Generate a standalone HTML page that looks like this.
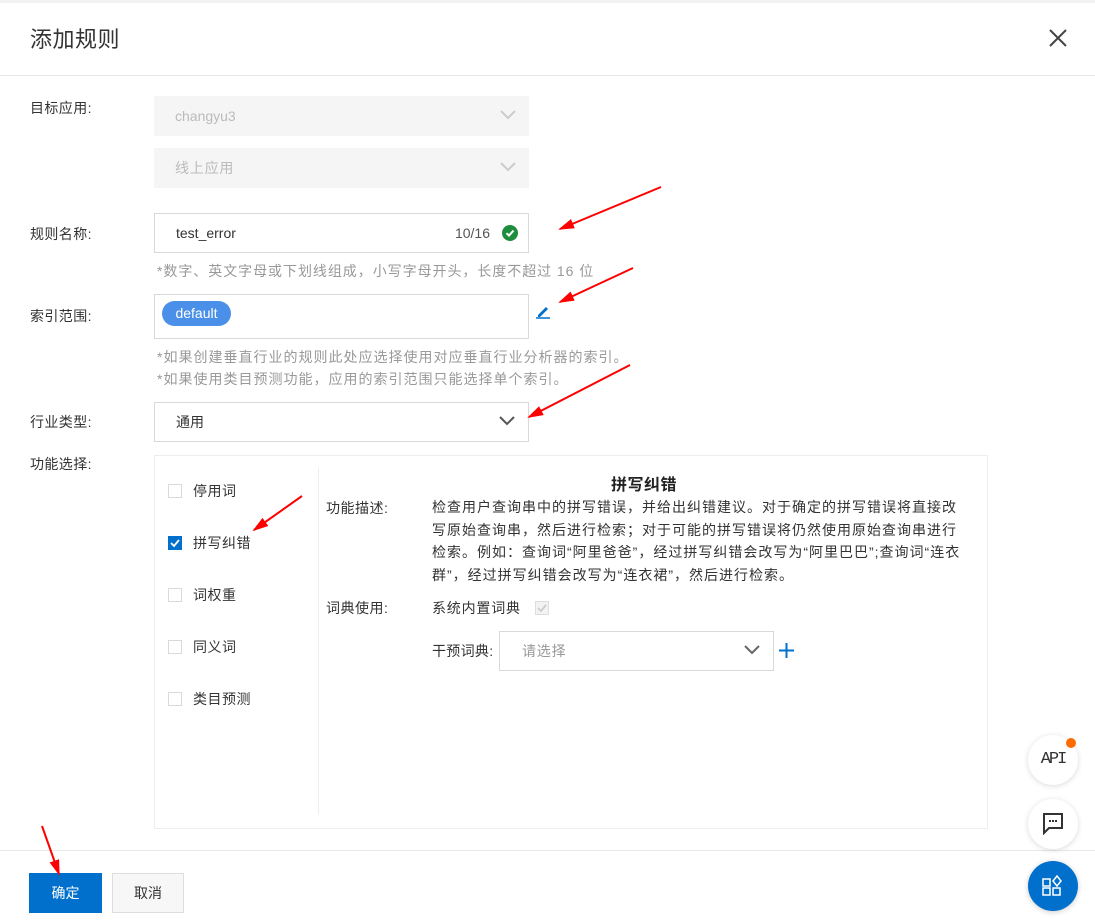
<!DOCTYPE html>
<html><head><meta charset="utf-8"><style>
*{box-sizing:border-box;margin:0;padding:0}
body{width:1095px;height:922px;background:#fff;font-family:"Liberation Sans","Noto Sans CJK SC",sans-serif;color:#333;font-size:14px;position:relative;overflow:hidden}
.a{position:absolute}
.lbl{position:absolute;left:30px;font-size:14px;color:#333;line-height:20px;letter-spacing:0.4px}
.sel{position:absolute;left:154px;width:375px;height:40px;line-height:40px;padding-left:21px;font-size:14px}
.chev{position:absolute;right:12px;top:12px}
.cb{position:absolute;left:168px;width:14px;height:14px;border:1px solid #d9d9d9;background:#fff}
.cl{position:absolute;left:193px;line-height:20px;letter-spacing:0.5px}
.d{position:absolute;left:432px;white-space:nowrap;line-height:22.5px;letter-spacing:1px}
</style></head><body>
<div class="a" style="left:0;top:0;width:1095px;height:3px;background:#f2f2f2"></div>
<div class="a" style="left:30px;top:24px;font-size:22px;line-height:32px;color:#333;letter-spacing:0.5px">添加规则</div>
<svg class="a" style="left:1048px;top:28px" width="20" height="20"><path d="M2 2L18 18M18 2L2 18" stroke="#444" stroke-width="2"/></svg>
<div class="a" style="left:0;top:75px;width:1095px;height:1px;background:#e8e8e8"></div>

<div class="lbl" style="top:98px">目标应用:</div>
<div class="sel" style="top:96px;background:#f5f5f5;color:#bbb">changyu3<svg class="chev" width="18" height="14"><path d="M2 3L9 10L16 3" stroke="#ccc" stroke-width="2" fill="none"/></svg></div>
<div class="sel" style="top:148px;background:#f5f5f5;color:#bbb;letter-spacing:0.8px">线上应用<svg class="chev" width="18" height="14"><path d="M2 3L9 10L16 3" stroke="#ccc" stroke-width="2" fill="none"/></svg></div>

<div class="lbl" style="top:224px">规则名称:</div>
<div class="sel" style="top:213px;border:1px solid #d9d9d9;color:#333;line-height:38px">test_error
<span class="a" style="right:38px;top:0;color:#555">10/16</span>
<svg class="a" style="right:10px;top:11px" width="16" height="16"><circle cx="8" cy="8" r="8" fill="#1e8e3e"/><path d="M4.5 8.2L7 10.6L11.5 5.6" stroke="#fff" stroke-width="2" fill="none"/></svg></div>
<div class="a" style="left:157px;top:261px;color:#999;line-height:20px;letter-spacing:0.95px">*数字、英文字母或下划线组成，小写字母开头，长度不超过 16 位</div>

<div class="lbl" style="top:306px">索引范围:</div>
<div class="a" style="left:154px;top:294px;width:375px;height:45px;border:1px solid #d9d9d9"></div>
<div class="a" style="left:162px;top:301px;width:69px;height:25px;border-radius:13px;background:#4a90e8;color:#fff;text-align:center;line-height:25px">default</div>
<svg class="a" style="left:535px;top:303px" width="16" height="16"><path d="M3 12L11 4L13 6L5 14H3Z" fill="#0070cc"/><path d="M1 15H15" stroke="#0070cc" stroke-width="1.5"/></svg>
<div class="a" style="left:157px;top:346px;color:#999;line-height:22px;letter-spacing:1px">*如果创建垂直行业的规则此处应选择使用对应垂直行业分析器的索引。<br>*如果使用类目预测功能，应用的索引范围只能选择单个索引。</div>

<div class="lbl" style="top:412px">行业类型:</div>
<div class="sel" style="top:402px;border:1px solid #d9d9d9;line-height:38px">通用<svg class="chev" style="top:11px" width="18" height="14"><path d="M2 3L9 10L16 3" stroke="#555" stroke-width="2" fill="none"/></svg></div>

<div class="lbl" style="top:454px">功能选择:</div>
<div class="a" style="left:154px;top:455px;width:834px;height:374px;border:1px solid #eee"></div>
<div class="a" style="left:318px;top:468px;width:1px;height:347px;background:#eee"></div>
<div class="cb" style="top:484px"></div><div class="cl" style="top:481px">停用词</div>
<div class="cb" style="top:536px;background:#0070cc;border-color:#0070cc"><svg width="12" height="12" style="position:absolute;left:0;top:0"><path d="M2 6L5 9L10 3" stroke="#fff" stroke-width="1.8" fill="none"/></svg></div><div class="cl" style="top:533px">拼写纠错</div>
<div class="cb" style="top:588px"></div><div class="cl" style="top:585px">词权重</div>
<div class="cb" style="top:640px"></div><div class="cl" style="top:637px">同义词</div>
<div class="cb" style="top:692px"></div><div class="cl" style="top:689px">类目预测</div>

<div class="a" style="left:611px;top:475px;font-size:16px;font-weight:bold;line-height:22px;color:#222;letter-spacing:0.5px">拼写纠错</div>
<div class="a" style="left:326px;top:497px;line-height:22px;letter-spacing:0.5px">功能描述:</div>
<div class="d" style="top:496px">检查用户查询串中的拼写错误，并给出纠错建议。对于确定的拼写错误将直接改<br>写原始查询串，然后进行检索；对于可能的拼写错误将仍然使用原始查询串进行<br>检索。例如：查询词“阿里爸爸”，经过拼写纠错会改写为“阿里巴巴”;查询词“连衣<br>群”，经过拼写纠错会改写为“连衣裙”，然后进行检索。</div>
<div class="a" style="left:326px;top:598px;line-height:20px;letter-spacing:0.5px">词典使用:</div>
<div class="a" style="left:432px;top:598px;line-height:20px;letter-spacing:0.8px">系统内置词典</div>
<div class="a" style="left:535px;top:601px;width:14px;height:14px;border:1px solid #ddd;background:#f3f3f3"><svg width="12" height="12" style="position:absolute;left:0;top:0"><path d="M2 6L5 9L10 3" stroke="#ccc" stroke-width="1.8" fill="none"/></svg></div>
<div class="a" style="left:432px;top:641px;line-height:20px;letter-spacing:0.3px">干预词典:</div>
<div class="a" style="left:499px;top:631px;width:275px;height:40px;border:1px solid #d9d9d9;line-height:38px;padding-left:22px;color:#999;letter-spacing:0.8px">请选择<svg class="chev" style="top:11px" width="18" height="14"><path d="M2 3L9 10L16 3" stroke="#666" stroke-width="2" fill="none"/></svg></div>
<svg class="a" style="left:779px;top:643px" width="15" height="15"><path d="M7.5 0V15M0 7.5H15" stroke="#0070cc" stroke-width="2"/></svg>

<div class="a" style="left:0;top:850px;width:1095px;height:1px;background:#e8e8e8"></div>
<div class="a" style="left:29px;top:873px;width:73px;height:40px;background:#0070cc;color:#fff;text-align:center;line-height:40px">确定</div>
<div class="a" style="left:112px;top:873px;width:72px;height:40px;background:#f7f7f7;border:1px solid #ddd;color:#333;text-align:center;line-height:38px">取消</div>

<div class="a" style="left:1028px;top:735px;width:50px;height:50px;border-radius:50%;background:#fff;box-shadow:0 1px 6px rgba(0,0,0,.15);text-align:center;line-height:50px;font-family:'Liberation Mono',monospace;font-size:17px;letter-spacing:-2px;color:#333">API</div>
<div class="a" style="left:1066px;top:738px;width:10px;height:10px;border-radius:50%;background:#ff6a00"></div>
<div class="a" style="left:1028px;top:799px;width:50px;height:50px;border-radius:50%;background:#fff;box-shadow:0 1px 6px rgba(0,0,0,.15)"><svg style="position:absolute;left:15px;top:14px" width="20" height="22"><path d="M1 1H19V15H6L1 20Z" stroke="#333" stroke-width="2" fill="none"/><path d="M6 8h2M9 8h2M12 8h2" stroke="#333" stroke-width="2"/></svg></div>
<div class="a" style="left:1028px;top:861px;width:50px;height:50px;border-radius:50%;background:#0070cc;box-shadow:0 1px 6px rgba(0,0,0,.2)"><svg style="position:absolute;left:14px;top:14px" width="22" height="22" fill="none" stroke="#fff" stroke-width="1.5"><rect x="1" y="4" width="7" height="7"/><rect x="1" y="13" width="7" height="7"/><rect x="11" y="13" width="7" height="7"/><path d="M15 1L19 6L15 11L11 6Z"/></svg></div>

<svg class="a" style="left:0;top:0" width="1095" height="922">
<defs><marker id="m" markerWidth="16" markerHeight="10" refX="14" refY="5" orient="auto" markerUnits="userSpaceOnUse"><path d="M0 0L16 5L0 10Z" fill="#f00"/></marker></defs>
<g stroke="#f00" stroke-width="2" marker-end="url(#m)">
<line x1="661" y1="187" x2="560" y2="229"/>
<line x1="633" y1="268" x2="560" y2="302"/>
<line x1="630" y1="365" x2="529" y2="417"/>
<line x1="302" y1="496" x2="254" y2="530"/>
<line x1="42" y1="826" x2="59" y2="874"/>
</g></svg>
</body></html>
